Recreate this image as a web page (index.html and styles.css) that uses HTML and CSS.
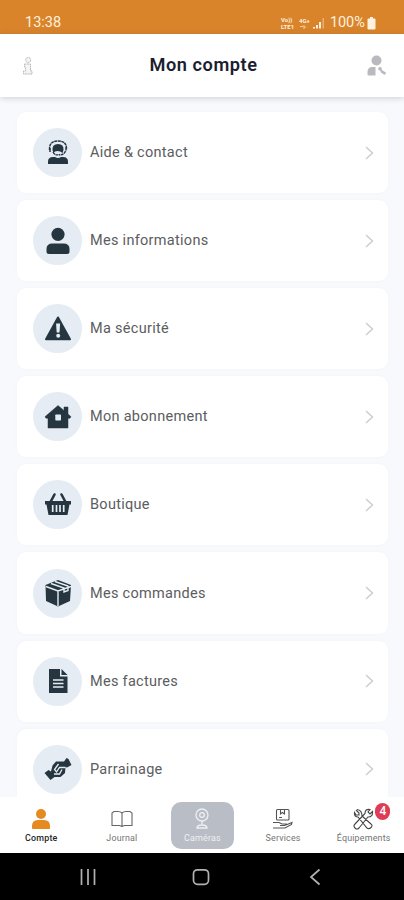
FILE: index.html
```html
<!DOCTYPE html>
<html lang="fr">
<head>
<meta charset="utf-8">
<title>Mon compte</title>
<link rel="stylesheet" href="styles.css">
</head>
<body>
<div class="phone">
  <div class="status">
    <span class="time">13:38</span>
    <div class="indicators">
      <span class="volte"><span>Vo))</span><span>LTE1</span></span>
      <span class="network"><span>4G+</span><svg width="9" height="6" viewBox="0 0 9 6"><path d="M1 2.500h3M5 1v3.500M5 4.500l2-2" fill="none" stroke="currentColor" opacity=".7"/></svg></span>
      <svg class="signal" width="12" height="12" viewBox="0 0 12 12"><path d="M0 10h2v1.500H0zM3 8h2v3.500H3zM6 5h2v6.500H6z" fill="currentColor"/><path d="M9.500 1h1.500v10.500H9.500z" fill="currentColor" opacity=".4"/></svg>
      <span class="percent">100%</span>
      <svg width="9" height="13" viewBox="0 0 9 13"><path d="M3 0h3v1.500h1.500q1 0 1 1V11.500q0 1-1 1h-6q-1 0-1-1v-9q0-1 1-1H3z" fill="currentColor"/></svg>
    </div>
  </div>

  <header class="header">
    <svg class="info" width="12" height="20" viewBox="0 0 12 20"><g fill="#f4f4f4" stroke="#bcbcbc" stroke-width="1" stroke-dasharray="2 .5"><circle cx="6.200" cy="4" r="2.500"/><path d="M2.500 8h6v7h1.500v3H1.500v-3h2v-4h-1z"/></g></svg>
    <h1>Mon compte</h1>
    <svg class="user-edit" width="20" height="21" viewBox="0 0 20 21"><g fill="#b9babd"><circle cx="9.500" cy="5.500" r="5"/><path d="M.5 19.500V17q0-5 5-5h3V20.500h-7q-1 0-1-1z"/><circle cx="13" cy="13.800" r="1.800"/><path d="M13.500 13l2 2.500 3.500 2-1 2.500-3.500-2-2-3.500z"/></g></svg>
  </header>

  <main class="list">
    <a class="card"><span class="disc"><svg width="28" height="28" viewBox="0 0 28 28"><path d="M4 25v-2.500Q4 18 9 18h2q3 2 6 0h2q5 0 5 4.500V25z" fill="#263641"/><path d="M8.500 11Q8 5 14 5t5.500 6l-1 3q-2-2-5-2t-4 2z" fill="#263641"/><path d="M5.500 11Q5 2 14 2t8.500 8.500M22 8v4M21.500 12q-1 3.500-6 4M9 13q2 4 7 2.500" fill="none" stroke="#263641" stroke-width="1.400" stroke-dasharray="3 .5"/><path d="M6 9v4" stroke="#263641" stroke-width="1.500"/></svg></span><span class="label">Aide &amp; contact</span><svg class="chevron" width="9" height="14" viewBox="0 0 9 14"><path d="M1 1l6.500 6L1 13"/></svg></a>
    <a class="card"><span class="disc"><svg width="28" height="28" viewBox="0 0 28 28"><g fill="#263641"><circle cx="14" cy="7.300" r="6.600"/><path d="M2.500 24.500V22q0-5.500 6-5.500h11q6 0 6 5.500v2.500q0 2.500-2.500 2.500H5q-2.500 0-2.500-2.500z"/></g></svg></span><span class="label">Mes informations</span><svg class="chevron" width="9" height="14" viewBox="0 0 9 14"><path d="M1 1l6.500 6L1 13"/></svg></a>
    <a class="card"><span class="disc"><svg width="28" height="28" viewBox="0 0 28 28"><path d="M14 2.500L26 24.300H2z" fill="#263641" stroke="#263641" stroke-width="2" stroke-linejoin="round"/><path d="M12.100 8.500h4l-.6 9h-2.800z" fill="#e5edf3"/><circle cx="14.200" cy="20.700" r="2" fill="#e5edf3"/></svg></span><span class="label">Ma sécurité</span><svg class="chevron" width="9" height="14" viewBox="0 0 9 14"><path d="M1 1l6.500 6L1 13"/></svg></a>
    <a class="card"><span class="disc"><svg width="28" height="28" viewBox="0 0 28 28"><path d="M14 2.500l6 5V4h4v7l3 2.700-1 1.500h-2V25H4V15.200H2l-1-1.500z" fill="#263641" stroke="#263641" stroke-width=".5"/><rect x="11.300" y="11.500" width="5.700" height="6" rx=".7" fill="#e5edf3"/></svg></span><span class="label">Mon abonnement</span><svg class="chevron" width="9" height="14" viewBox="0 0 9 14"><path d="M1 1l6.500 6L1 13"/></svg></a>
    <a class="card"><span class="disc"><svg width="28" height="28" viewBox="0 0 28 28"><path d="M1 10h26v3.500h-1.500L23.500 24H4.500l-2-10.500H1z" fill="#263641"/><path d="M6.500 11l4-7.500M21.500 11l-4-7.500" stroke="#263641" stroke-width="2.600" stroke-linecap="round"/><path d="M8.700 14v7M12.500 14v7M16 14v7M19.700 14v7" stroke="#e5edf3" stroke-width="1.700"/></svg></span><span class="label">Boutique</span><svg class="chevron" width="9" height="14" viewBox="0 0 9 14"><path d="M1 1l6.500 6L1 13"/></svg></a>
    <a class="card"><span class="disc"><svg width="28" height="28" viewBox="0 0 28 28"><path d="M14 1l13 5-1 16-12 5.500L2 22 1.500 6z" fill="#263641"/><path d="M2 7.500l12 4.500 13-4.500M14 12v15M7 4.500l13 4.500v4l4-1.500V7L11 2.500" fill="none" stroke="#e5edf3" stroke-width="1.400"/></svg></span><span class="label">Mes commandes</span><svg class="chevron" width="9" height="14" viewBox="0 0 9 14"><path d="M1 1l6.500 6L1 13"/></svg></a>
    <a class="card"><span class="disc"><svg width="28" height="28" viewBox="0 0 28 28"><path d="M5 2h11v7.500h7.500V26H5z" fill="#263641"/><path d="M17.500 2l6 6h-6z" fill="#263641"/><path d="M9 13h10.500M9 16.500h10.500M9 20h10.500" stroke="#e5edf3" stroke-width="1.700"/></svg></span><span class="label">Mes factures</span><svg class="chevron" width="9" height="14" viewBox="0 0 9 14"><path d="M1 1l6.500 6L1 13"/></svg></a>
    <a class="card"><span class="disc"><svg width="28" height="28" viewBox="0 0 28 28"><path d="M.5 18l4-3 2.500 1.500 1.500-6 3.500-4h8l2.500-3.500 2 1L27.500 10 23 12.500l-1.500-.500-.5 6-4.500 4h-6L6.500 25z" fill="#263641"/><path d="M14.500 9l-4 5.500 2 2.500 3-4.500h6M10 19h5.500l2.500-4.500" fill="none" stroke="#e5edf3" stroke-width="1.300"/></svg></span><span class="label">Parrainage</span><svg class="chevron" width="9" height="14" viewBox="0 0 9 14"><path d="M1 1l6.500 6L1 13"/></svg></a>
  </main>

  <nav class="tabs">
    <a class="tab active"><svg width="26" height="22" viewBox="0 0 26 22"><g fill="#e58a20"><circle cx="13" cy="6" r="5"/><path d="M4 20v-2q0-6 6-6h6q6 0 6 6v2q0 1-1 1H5q-1 0-1-1z"/></g></svg><span>Compte</span></a>
    <a class="tab"><svg width="26" height="22" viewBox="0 0 26 22"><path d="M13 5Q11.500 3.500 9 3.500H5L3 5v12.500h7.500l2.500 1 2.500-1H23V5l-2-1.500h-4Q14.500 3.500 13 5zV18" fill="none" stroke="#666" stroke-width="1.100"/></svg><span>Journal</span></a>
    <a class="tab camera"><svg width="26" height="22" viewBox="0 0 26 22"><g fill="none" stroke="#eef0f3" stroke-width="1.300"><circle cx="13" cy="7" r="6"/><circle cx="13" cy="7" r="2.300"/><path d="M13 13v4M8 20q0-3 5-3t5 3z"/></g></svg><span>Caméras</span></a>
    <a class="tab"><svg width="26" height="22" viewBox="0 0 26 22"><g fill="none" stroke="#555" stroke-width="1.100"><rect x="6.500" y="1.500" width="12.500" height="10.500" rx="1"/><path d="M10.500 2v4l2-1.500 2 1.500V2M9 9.500h3M3 14.500h6l3 1.500h4l-1 1.500h-5M16 17l6-2.500-.5 2-6.500 3.500H3"/></g></svg><span>Services</span></a>
    <a class="tab"><svg width="26" height="22" viewBox="0 0 26 22"><g fill="none" stroke="#444" stroke-width="1.100"><path d="M5 2l3 3v2H5L3.500 4.500Q3 9 7 9l9 11q2 1.500 4-.5t0-3.500L11 8Q11 2 6 1.500M21.500 3.500L19 6l-2-2 2-2.500q-5-1-5 4L4 16q-2 2 0 4t4 0l9-11q5 0 4.500-5.500z"/></g></svg><span>Équipements</span><b class="badge">4</b></a>
  </nav>

  <div class="system">
    <svg width="16" height="18" viewBox="0 0 16 18"><path d="M1.500 1v16M8 1v16M14.500 1v16"/></svg>
    <svg class="home" width="18" height="18" viewBox="0 0 18 18"><rect x="1.500" y="1.800" width="15" height="14.500" rx="4"/></svg>
    <svg width="12" height="18" viewBox="0 0 12 18"><path d="M10.500 1.500L2 9l8.500 7.500"/></svg>
  </div>
</div>
</body>
</html>
```

FILE: styles.css
```css
* { box-sizing: border-box; }
body { margin: 0; font-family: Roboto, "Liberation Sans", sans-serif; }
svg { display: block; flex: none; }

.phone {
  display: flex;
  flex-direction: column;
  width: 404px;
  height: 900px;
  overflow: hidden;
  background: #f7f9fc;
}

.status {
  flex: none;
  display: flex;
  justify-content: space-between;
  height: 34px;
  padding: 13px 28px 0 25px;
  background: #d9842b;
  color: #fff1df;
}
.time { font-size: 14.5px; line-height: 20px; }
.indicators { display: flex; align-items: center; height: 20px; }
.volte, .network { display: flex; flex-direction: column; font-size: 6px; font-weight: 700; line-height: 7px; }
.volte { width: 18px; }
.network { width: 14px; }
.signal { margin-right: 5px; }
.percent { width: 37px; font-size: 14.5px; line-height: 20px; letter-spacing: -.1px; }

.header {
  flex: none;
  display: flex;
  align-items: center;
  justify-content: space-between;
  height: 63px;
  padding: 0 17px 0 22px;
  background: #fff;
  box-shadow: 0 1px 6px rgba(50, 60, 75, .22);
}
h1 { margin: 0; padding-left: 6px; font-size: 18.2px; font-weight: 600; line-height: 24px; letter-spacing: .55px; transform: translateY(-1px); color: #1b1e30; }

.list {
  flex: 1;
  min-height: 0;
  display: flex;
  flex-direction: column;
  gap: 7px;
  padding: 15px 16px 0 17px;
  overflow: hidden;
}
.card {
  flex: none;
  display: flex;
  align-items: center;
  height: 81.1px;
  padding: 0 14px 0 16px;
  border-radius: 9px;
  background: #fff;
  box-shadow: 0 0 3px rgba(80, 90, 110, .035);
}
.disc {
  display: flex;
  align-items: center;
  justify-content: center;
  width: 49px;
  height: 49px;
  border-radius: 50%;
  background: #e5ecf4;
}
.label { flex: 1; margin-left: 8px; padding-top: 1px; font-size: 14.5px; line-height: 20px; letter-spacing: .29px; color: #5b5d60; }
.chevron { fill: none; stroke: #c9cacc; stroke-width: 1.3; }

.tabs {
  flex: none;
  display: grid;
  grid-template-columns: repeat(5, 1fr);
  height: 56px;
  padding: 5px 0 0 1px;
  background: #fff;
}
.tab {
  position: relative;
  display: flex;
  flex-direction: column;
  align-items: center;
  height: 47px;
  padding-top: 6px;
  font-size: 8.9px;
  line-height: 12px;
  letter-spacing: .2px;
  color: #737373;
}
.tab span { margin-top: 2px; }
.tab.active { color: #252525; font-weight: 500; }
.tab.camera { justify-self: center; width: 63px; border-radius: 10px; background: #b9bdc5; color: #eef0f3; }
.badge {
  position: absolute;
  top: 1px;
  left: 52px;
  width: 15px;
  height: 17px;
  border-radius: 8px;
  background: #df3c55;
  color: #fff;
  font-size: 12px;
  font-weight: 500;
  line-height: 17px;
  text-align: center;
}

.system {
  flex: none;
  display: flex;
  align-items: center;
  justify-content: space-between;
  height: 47px;
  padding: 0 83px 0 80px;
  background: #000;
}
.system svg { fill: none; stroke: #b2b2b2; stroke-width: 1.7; }
.system .home { margin-right: 3px; }
```
